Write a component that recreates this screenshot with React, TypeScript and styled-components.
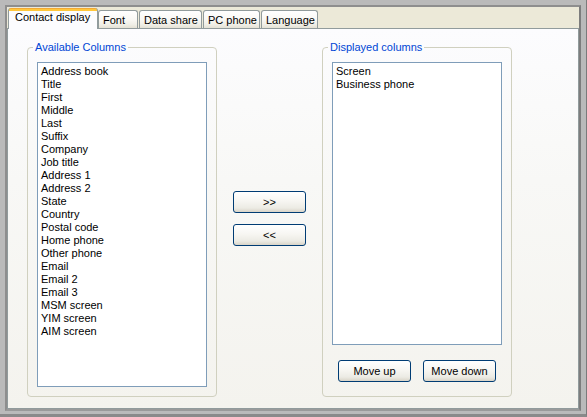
import React from 'react';
import styled, { createGlobalStyle } from 'styled-components';

const GlobalStyle = createGlobalStyle`
  html, body { margin: 0; padding: 0; background: #b9b9b9; }
  body { font-family: "Liberation Sans", Arial, sans-serif; font-size: 11px; }
  * { box-sizing: border-box; }
`;

const Frame = styled.div`
  width: 587px;
  height: 417px;
  background: #bababa;
  padding: 5px 5px 3px 5px;
  border-right: 1px solid #7b7b7b;
  border-bottom: 3px solid #8a8a8a;
`;

const Window = styled.div`
  width: 576px;
  height: 406px;
  border-top: 2px solid #8e8e8e;
  border-left: 2px solid #8e8e8e;
  border-right: 2px solid #7d7d7d;
  border-bottom: 2px solid #9a9a9a;
  display: flex;
  flex-direction: column;
`;

const TabStrip = styled.div`
  height: 21px;
  flex: none;
  background: #ece9d8;
  display: flex;
  align-items: flex-end;
  padding-left: 1px;
  position: relative;
  z-index: 1;
`;

const Tab = styled.div<{ $active?: boolean; $w: number; $ml: number }>`
  width: ${(p) => p.$w}px;
  height: ${(p) => (p.$active ? 21 : 18)}px;
  margin-left: ${(p) => p.$ml}px;
  margin-bottom: ${(p) => (p.$active ? -1 : 0)}px;
  border: 1px solid #919b9c;
  border-top: ${(p) => (p.$active ? 'none' : '1px solid #919b9c')};
  border-bottom: none;
  border-radius: 3px 3px 0 0;
  background: ${(p) =>
    p.$active
      ? 'linear-gradient(180deg, #e68b2c 0px, #ffc73c 1px, #ffc73c 3px, #fcfcfe 3px)'
      : 'linear-gradient(180deg, #ffffff 0%, #f9f8f4 50%, #efeee6 80%, #e4e1d4 100%)'};
  padding: ${(p) => (p.$active ? '3px 0 0 6px' : '3px 0 0 4px')};
  line-height: 13px;
  color: #000;
  white-space: nowrap;
`;

const Panel = styled.div`
  flex: 1;
  border: 1px solid #919b9c;
  background: linear-gradient(180deg, #fcfcfe 0%, #f8f8f6 40%, #f4f3ee 100%);
  display: flex;
  align-items: flex-start;
  padding: 12px 0 0 19px;
`;

const GroupBox = styled.fieldset<{ $w: number }>`
  margin: 0;
  width: ${(p) => p.$w}px;
  height: 356px;
  min-width: 0;
  border: 1px solid #d0d0bf;
  border-radius: 4px;
  padding: 8px 9px 9px 9px;
  display: flex;
  flex-direction: column;
`;

const Legend = styled.legend`
  color: #0046d5;
  padding: 0 2px;
  margin-left: -4px;
  line-height: 13px;
  font-size: 11px;
`;

const ListBox = styled.div<{ $h: number }>`
  width: 170px;
  height: ${(p) => p.$h}px;
  flex: none;
  border: 1px solid #7f9db9;
  background: #fff;
  padding: 2px 3px;
`;

const Item = styled.div`
  height: 13px;
  line-height: 13px;
  color: #000;
  white-space: nowrap;
`;

const Middle = styled.div`
  width: 105px;
  flex: none;
  display: flex;
  flex-direction: column;
  align-items: center;
  gap: 11px;
  padding-top: 150px;
`;

const Button = styled.button`
  width: 73px;
  height: 22px;
  border: 1px solid #003c74;
  border-radius: 3px;
  background: linear-gradient(180deg, #ffffff 0%, #f7f6f2 45%, #ecebe4 80%, #d9d4c8 100%);
  font-family: "Liberation Sans", Arial, sans-serif;
  font-size: 11px;
  color: #000;
  padding: 0;
  line-height: 13px;
`;

const ButtonRow = styled.div`
  display: flex;
  gap: 12px;
  padding: 15px 0 0 6px;
`;

const available = [
  'Address book', 'Title', 'First', 'Middle', 'Last', 'Suffix', 'Company', 'Job title',
  'Address 1', 'Address 2', 'State', 'Country', 'Postal code', 'Home phone', 'Other phone',
  'Email', 'Email 2', 'Email 3', 'MSM screen', 'YIM screen', 'AIM screen',
];
const displayed = ['Screen', 'Business phone'];

const tabs = [
  { label: 'Contact display', w: 90, ml: 0, active: true },
  { label: 'Font', w: 40, ml: 0 },
  { label: 'Data share', w: 63, ml: 1 },
  { label: 'PC phone', w: 57, ml: 1 },
  { label: 'Language', w: 57, ml: 1 },
];

export default function App() {
  return (
    <>
      <GlobalStyle />
      <Frame>
        <Window>
          <TabStrip>
            {tabs.map((t) => (
              <Tab key={t.label} $active={t.active} $w={t.w} $ml={t.ml}>
                {t.label}
              </Tab>
            ))}
          </TabStrip>
          <Panel>
            <GroupBox $w={190}>
              <Legend>Available Columns</Legend>
              <ListBox $h={325}>
                {available.map((a) => (
                  <Item key={a}>{a}</Item>
                ))}
              </ListBox>
            </GroupBox>
            <Middle>
              <Button>&gt;&gt;</Button>
              <Button>&lt;&lt;</Button>
            </Middle>
            <GroupBox $w={190}>
              <Legend>Displayed columns</Legend>
              <ListBox $h={283}>
                {displayed.map((a) => (
                  <Item key={a}>{a}</Item>
                ))}
              </ListBox>
              <ButtonRow>
                <Button>Move up</Button>
                <Button>Move down</Button>
              </ButtonRow>
            </GroupBox>
          </Panel>
        </Window>
      </Frame>
    </>
  );
}
